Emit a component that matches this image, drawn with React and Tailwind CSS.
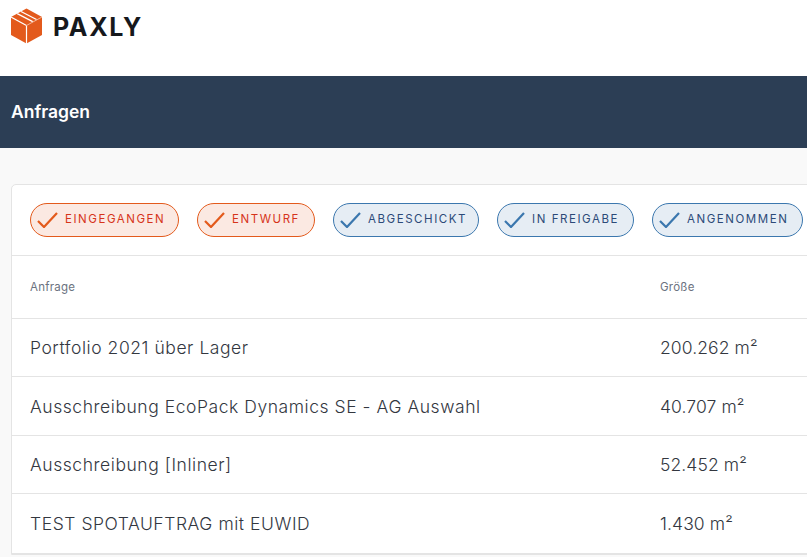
import React from "react";

const filters = [
    { label: "EINGEGANGEN", tone: "orange", width: "w-[149px]" },
    { label: "ENTWURF", tone: "orange", width: "w-[118px]" },
    { label: "ABGESCHICKT", tone: "blue", width: "w-[146px]" },
    { label: "IN FREIGABE", tone: "blue", width: "w-[137px]" },
    { label: "ANGENOMMEN", tone: "blue", width: "w-[151px]" },
];

const rows = [
    { name: "Portfolio 2021 über Lager", size: "200.262 m²", height: "h-[58px]" },
    { name: "Ausschreibung EcoPack Dynamics SE - AG Auswahl", size: "40.707 m²", height: "h-[59px]" },
    { name: "Ausschreibung [Inliner]", size: "52.452 m²", height: "h-[58px]" },
    { name: "TEST SPOTAUFTRAG mit EUWID", size: "1.430 m²", height: "h-[60px]" },
];

function Logo() {
    return (
        <svg width="32" height="36" viewBox="0 0 32 36" className="shrink-0">
            <path d="M15.5 0.5 L31 9 V27 L15.5 35.5 L0 27 V9 Z" fill="#e35a1c" />
            <path d="M15.5 17.5 V36 M0 9 L15.5 17.5" stroke="#ffffff" strokeWidth="1.2" fill="none" />
            <path d="M15.5 17.5 L31 9" stroke="#f3b79a" strokeWidth="1" fill="none" />
            <path d="M6.2 5.6 L21.7 13.6 M10 3.5 L25.5 11.5" stroke="#ffffff" strokeWidth="1.3" fill="none" />
        </svg>
    );
}

function Check({ color }) {
    return (
        <svg width="21" height="16" viewBox="0 0 21 16" fill="none" className="shrink-0">
            <path d="M1 9 L7 15 L20 1" stroke={color} strokeWidth="2.2" />
        </svg>
    );
}

function FilterChip({ label, tone, width }) {
    const orange = tone === "orange";
    return (
        <div
            className={`${width} h-[34px] shrink-0 flex items-center gap-[7px] pl-[6px] rounded-full border ${
                orange ? "bg-[#fbe9e2] border-[#e35a1c] text-[#d6341a]" : "bg-[#e6edf4] border-[#3b77ae] text-[#2c4a78]"
            }`}
        >
            <Check color={orange ? "#e35a1c" : "#3b77ae"} />
            <span className="text-[11.5px] font-normal tracking-[1.55px] whitespace-nowrap">{label}</span>
        </div>
    );
}

export default function App() {
    return (
        <div className="w-[807px] h-[557px] overflow-hidden bg-[#f9f9f9] font-['Inter',sans-serif]">
            {/* Logo bar */}
            <div className="h-[76px] bg-white flex items-start pl-[11px] pt-[8px] gap-[10px]">
                <Logo />
                <span className="text-[25px] leading-[38px] font-bold tracking-[1.7px] text-[#16181c]">PAXLY</span>
            </div>

            {/* Title bar */}
            <div className="h-[72px] bg-[#2c3e55] flex items-center px-[11px]">
                <h1 className="text-[17.5px] font-semibold text-white">Anfragen</h1>
            </div>

            {/* Card */}
            <div className="pt-[36px] pl-[11px]">
                <div className="w-[820px] bg-white border border-[#e4e4e4] rounded-tl-[5px]">
                    <div className="h-[71px] flex items-center gap-[18px] pl-[18px] border-b border-[#e4e4e4]">
                        {filters.map((f) => (
                            <FilterChip key={f.label} {...f} />
                        ))}
                    </div>

                    <div className="h-[63px] flex items-center pl-[18px] pt-[2px] border-b border-[#e4e4e4] text-[11.5px] text-[#6b7280] tracking-[0.25px]">
                        <span className="w-[630px]">Anfrage</span>
                        <span>Größe</span>
                    </div>

                    {rows.map((r) => (
                        <div
                            key={r.name}
                            className={`${r.height} flex items-center pl-[18px] pt-[2px] border-b border-[#e4e4e4] text-[17.5px] font-light text-[#33373f]`}
                        >
                            <span className="w-[630px] tracking-[0.55px]">{r.name}</span>
                            <span className="tracking-[0.1px]">{r.size}</span>
                        </div>
                    ))}
                </div>
            </div>
        </div>
    );
}
